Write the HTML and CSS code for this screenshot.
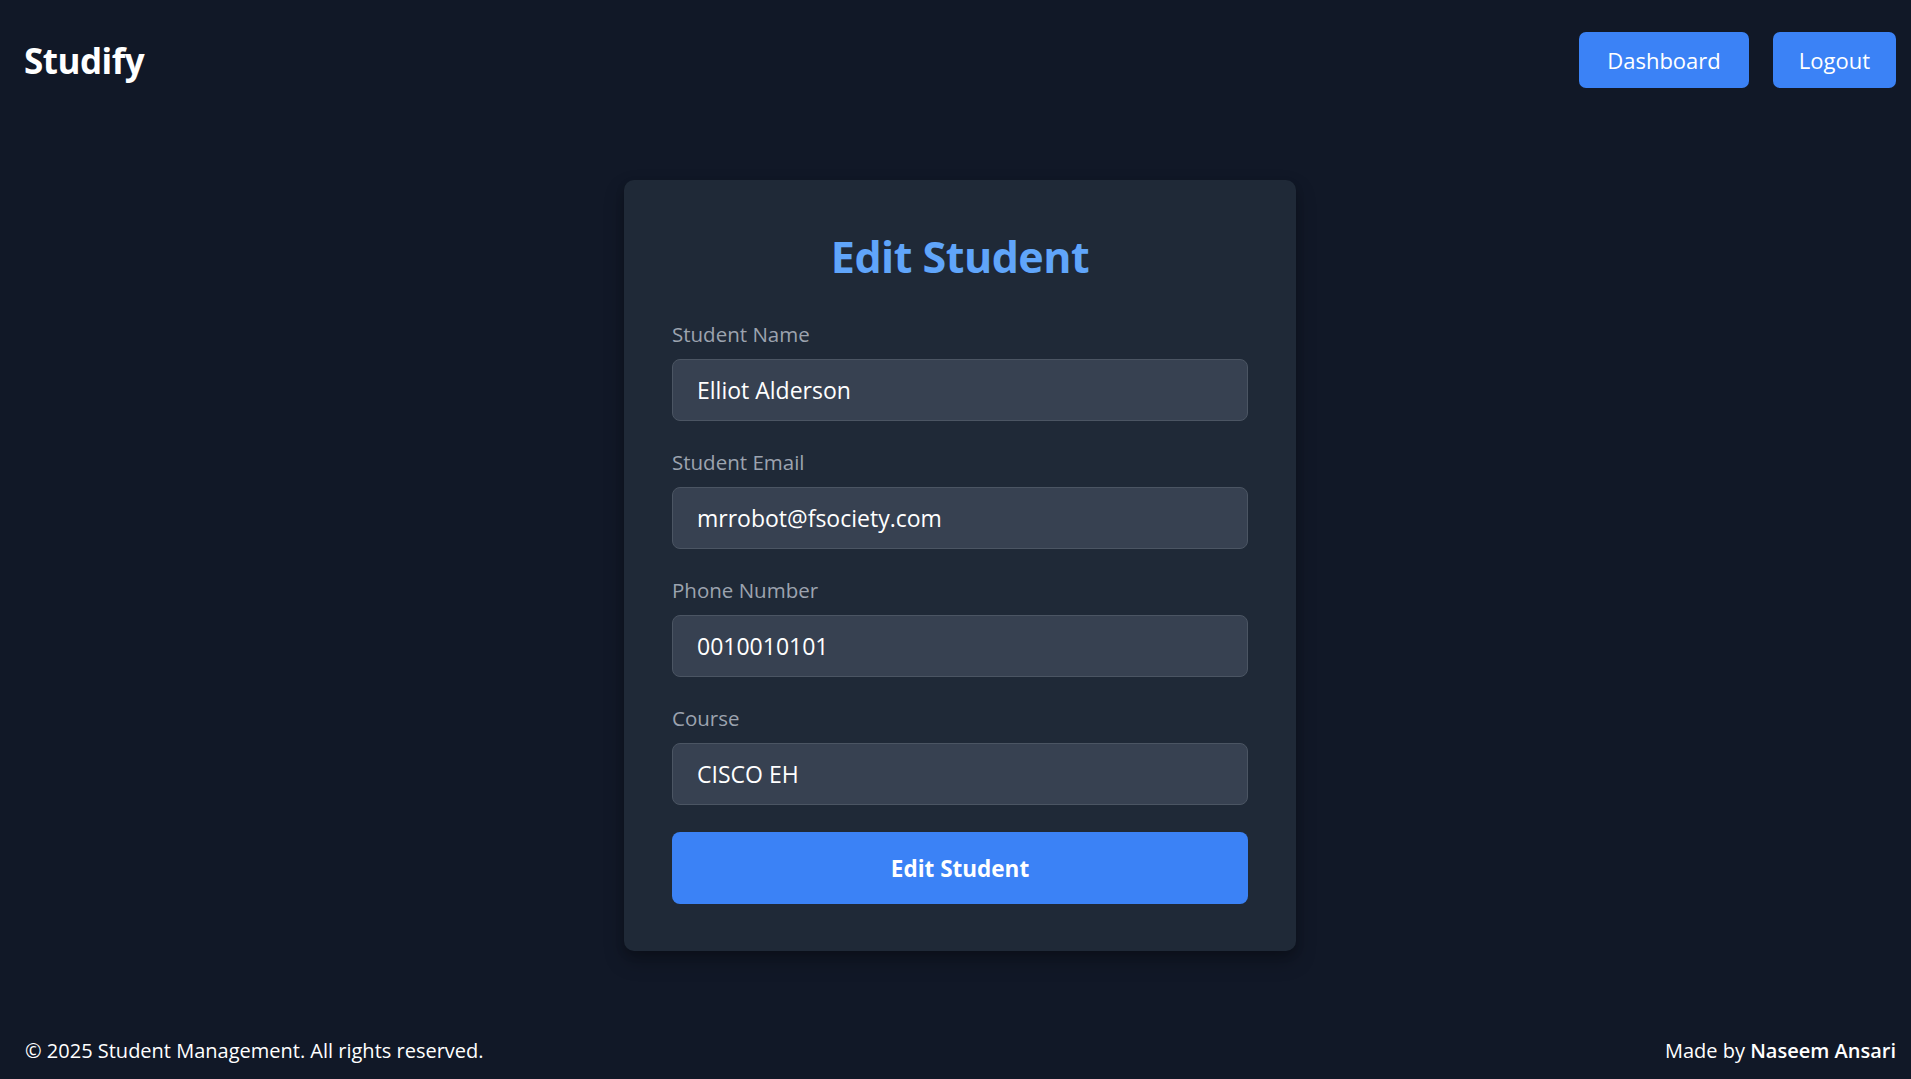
FILE: index.html
```html
<!DOCTYPE html>
<html lang="en">
<head>
<meta charset="utf-8">
<title>Studify - Edit Student</title>
<link rel="stylesheet" href="styles.css">
</head>
<body>
<div class="page">
  <header class="topbar">
    <div class="brand">Studify</div>
    <nav class="nav">
      <a class="nav-btn" href="#">Dashboard</a>
      <a class="nav-btn" href="#">Logout</a>
    </nav>
  </header>
  <main class="main">
    <form class="card">
      <h1 class="card-title">Edit Student</h1>
      <div class="field">
        <label class="field-label">Student Name</label>
        <input class="field-input" type="text" value="Elliot Alderson">
      </div>
      <div class="field">
        <label class="field-label">Student Email</label>
        <input class="field-input" type="email" value="mrrobot@fsociety.com">
      </div>
      <div class="field">
        <label class="field-label">Phone Number</label>
        <input class="field-input" type="text" value="0010010101">
      </div>
      <div class="field">
        <label class="field-label">Course</label>
        <input class="field-input" type="text" value="CISCO EH">
      </div>
      <button class="submit" type="button">Edit Student</button>
    </form>
  </main>
  <footer class="footer">
    <span>© 2025 Student Management. All rights reserved.</span>
    <span>Made by <strong class="author">Naseem Ansari</strong></span>
  </footer>
</div>
</body>
</html>
```

FILE: styles.css
```css
* { box-sizing: border-box; }
html, body { margin: 0; padding: 0; }
body {
  background: #111827;
  color: #ffffff;
  font-family: "Open Sans", "Noto Sans", "Liberation Sans", sans-serif;
}
.page {
  min-height: 100vh;
  display: flex;
  flex-direction: column;
}
.topbar {
  display: flex;
  justify-content: space-between;
  align-items: center;
  height: 88px;
  padding: 32px 15px 0 24px;
}
.brand {
  font-size: 35px;
  font-weight: 700;
  letter-spacing: -0.5px;
  line-height: 56px;
  padding-top: 2px;
}
.nav { display: flex; gap: 24px; }
.nav-btn {
  display: block;
  height: 56px;
  line-height: 56px;
  padding: 0 28px;
  background: #3b82f6;
  color: #ffffff;
  border-radius: 7px;
  font-size: 22px;
  text-decoration: none;
}
.nav-btn + .nav-btn { padding: 0 26px; }
.main {
  flex: 1;
  display: flex;
  justify-content: center;
  align-items: flex-start;
  padding: 92px 0 0 9px;
}
.card {
  width: 672px;
  background: #1f2937;
  border-radius: 10px;
  padding: 48px 48px 47px;
  box-shadow: 0 10px 20px rgba(0,0,0,0.25), 0 4px 8px rgba(0,0,0,0.15);
  display: flex;
  flex-direction: column;
}
.card-title {
  margin: 0 0 33px;
  text-align: center;
  color: #60a5fa;
  font-size: 43px;
  line-height: 58px;
  font-weight: 700;
  letter-spacing: -0.5px;
}
.field {
  display: flex;
  flex-direction: column;
  margin-bottom: 26px;
}
.field:last-of-type { margin-bottom: 27px; }
.field-label {
  color: #9ca3af;
  font-size: 20.5px;
  line-height: 30px;
  font-weight: 500;
  margin-bottom: 10px;
}
.field-input {
  height: 62px;
  padding: 0 24px;
  background: #374151;
  border: 1px solid #4b5563;
  border-radius: 8px;
  color: #ffffff;
  font-family: inherit;
  font-size: 23px;
  outline: none;
}
.submit {
  height: 72px;
  border: 0;
  border-radius: 8px;
  background: #3b82f6;
  color: #ffffff;
  font-family: inherit;
  font-size: 22.5px;
  font-weight: 700;
  cursor: pointer;
}
.footer {
  display: flex;
  justify-content: space-between;
  align-items: center;
  padding: 0 15px 13px 25px;
  font-size: 20px;
  line-height: 30px;
}
.author { font-weight: 600; }
```
